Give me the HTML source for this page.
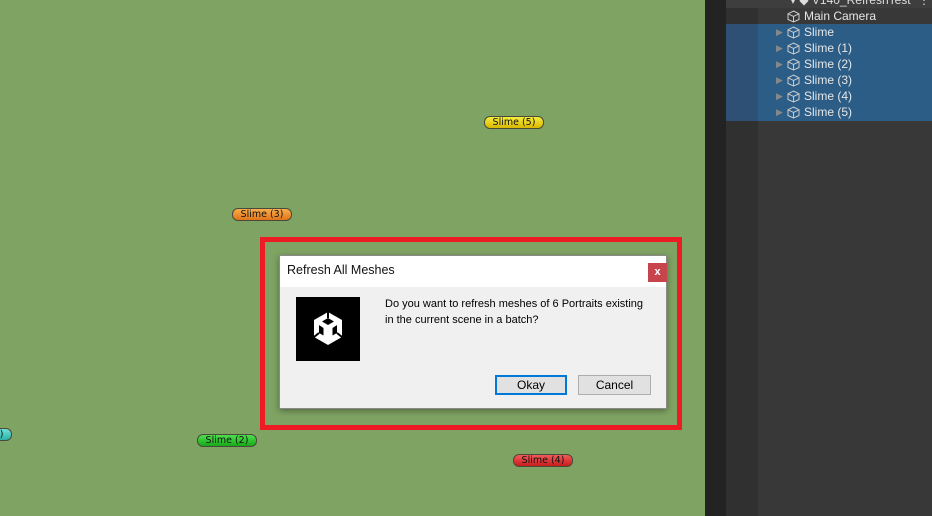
<!DOCTYPE html>
<html><head><style>
body{margin:0;width:932px;height:516px;position:relative;overflow:hidden;background:#7fa363;font-family:"Liberation Sans",sans-serif}
.pill{position:absolute;height:11px;border-radius:6px;border:1px solid #4a4a3a;font-family:"DejaVu Sans",sans-serif;font-size:9.5px;line-height:11px;color:#111;text-align:center;width:58px}
.row{position:absolute;left:726px;width:206px;height:16px;font-size:12px;line-height:16px;color:#e6e6e6}
.row span.t{position:absolute;left:78px}
.row span.a{position:absolute;left:50px;color:#888;font-size:9px}
.cube{position:absolute;left:61px;top:2px}
</style></head><body>
<div class="pill" style="left:484px;top:116px;background:linear-gradient(#f7ec3c,#d8b800)">Slime (5)</div>
<div class="pill" style="left:232px;top:208px;background:linear-gradient(#f9ae4a,#e0741a)">Slime (3)</div>
<div class="pill" style="left:197px;top:434px;background:linear-gradient(#4ee04e,#16a816)">Slime (2)</div>
<div class="pill" style="left:513px;top:454px;background:linear-gradient(#f25a5a,#c81c1c)">Slime (4)</div>
<div class="pill" style="left:-48px;top:428px;background:linear-gradient(#6fe0d8,#2ab0a8)">Slime (1)</div>

<div style="position:absolute;left:705px;top:0;width:21px;height:516px;background:#232323"></div>
<div style="position:absolute;left:726px;top:0;width:206px;height:516px;background:#383838"></div>
<div style="position:absolute;left:726px;top:0;width:32px;height:516px;background:#303030"></div>
<div style="position:absolute;left:726px;top:0;width:206px;height:8px;background:#3e3e3e;overflow:hidden"><span style="position:absolute;left:64px;top:-7px;color:#ddd;font-size:12px">▾ ◆ V140_RefreshTest</span><span style="position:absolute;right:2px;top:-7px;color:#ccc;font-size:12px">⋮</span></div>
<div style="position:absolute;left:726px;top:24px;width:206px;height:97px;background:#2c5d87"></div>
<div style="position:absolute;left:726px;top:24px;width:32px;height:97px;background:#2d5074"></div>

<div class="row" style="top:8px"><svg class="cube" width="13" height="13" viewBox="0 0 13 13" fill="none" stroke="#ccc" stroke-width="1"><path d="M6.5 1L12 3.8V9.5L6.5 12L1 9.5V3.8Z M1 3.8L6.5 6.5L12 3.8 M6.5 6.5V12"/></svg><span class="t">Main Camera</span></div>
<div class="row" style="top:24px"><span class="a">▶</span><svg class="cube" width="13" height="13" viewBox="0 0 13 13" fill="none" stroke="#ccc"><path d="M6.5 1L12 3.8V9.5L6.5 12L1 9.5V3.8Z M1 3.8L6.5 6.5L12 3.8 M6.5 6.5V12"/></svg><span class="t">Slime</span></div>
<div class="row" style="top:40px"><span class="a">▶</span><svg class="cube" width="13" height="13" viewBox="0 0 13 13" fill="none" stroke="#ccc"><path d="M6.5 1L12 3.8V9.5L6.5 12L1 9.5V3.8Z M1 3.8L6.5 6.5L12 3.8 M6.5 6.5V12"/></svg><span class="t">Slime (1)</span></div>
<div class="row" style="top:56px"><span class="a">▶</span><svg class="cube" width="13" height="13" viewBox="0 0 13 13" fill="none" stroke="#ccc"><path d="M6.5 1L12 3.8V9.5L6.5 12L1 9.5V3.8Z M1 3.8L6.5 6.5L12 3.8 M6.5 6.5V12"/></svg><span class="t">Slime (2)</span></div>
<div class="row" style="top:72px"><span class="a">▶</span><svg class="cube" width="13" height="13" viewBox="0 0 13 13" fill="none" stroke="#ccc"><path d="M6.5 1L12 3.8V9.5L6.5 12L1 9.5V3.8Z M1 3.8L6.5 6.5L12 3.8 M6.5 6.5V12"/></svg><span class="t">Slime (3)</span></div>
<div class="row" style="top:88px"><span class="a">▶</span><svg class="cube" width="13" height="13" viewBox="0 0 13 13" fill="none" stroke="#ccc"><path d="M6.5 1L12 3.8V9.5L6.5 12L1 9.5V3.8Z M1 3.8L6.5 6.5L12 3.8 M6.5 6.5V12"/></svg><span class="t">Slime (4)</span></div>
<div class="row" style="top:104px"><span class="a">▶</span><svg class="cube" width="13" height="13" viewBox="0 0 13 13" fill="none" stroke="#ccc"><path d="M6.5 1L12 3.8V9.5L6.5 12L1 9.5V3.8Z M1 3.8L6.5 6.5L12 3.8 M6.5 6.5V12"/></svg><span class="t">Slime (5)</span></div>

<div style="position:absolute;left:260px;top:237px;width:412px;height:183px;border:5px solid #ed1c24"></div>
<div style="position:absolute;left:279px;top:255px;width:388px;height:154px;background:#f0f0f0;box-shadow:0 2px 6px rgba(0,0,0,.35);border:1px solid #8a8a8a;box-sizing:border-box">
 <div style="height:31px;background:#fff;font-size:12.5px;line-height:28px;padding-left:7px;color:#111">Refresh All Meshes</div>
 <div style="position:absolute;left:368px;top:7px;width:19px;height:19px;background:#c8444c;color:#fff;font-size:11px;line-height:18px;text-align:center;font-weight:bold">x</div>
 <div style="position:absolute;left:16px;top:41px;width:64px;height:64px;background:#000">
  <svg width="64" height="64" viewBox="0 0 64 64"><path d="M32 15L46 23V40L32 48L18 40V23Z" fill="#fff"/><path d="M32 21L26 24.5L32 28L38 24.5Z M23 28V36L27.5 38.5V31Z M41 28V36L36.5 38.5V31Z" fill="#000"/><path d="M27.5 31L32 33.5L36.5 31V38.5L32 41L27.5 38.5Z" fill="#fff"/><path d="M32 15V21 M18 40L23 36 M46 40L41 36" stroke="#000" stroke-width="2"/></svg>
 </div>
 <div style="position:absolute;left:105px;top:40px;font-size:11px;line-height:16px;color:#000">Do you want to refresh meshes of 6 Portraits existing<br>in the current scene in a batch?</div>
 <div style="position:absolute;left:215px;top:119px;width:72px;height:20px;box-sizing:border-box;border:2px solid #0078d7;background:#e1e1e1;font-size:12px;line-height:16px;text-align:center">Okay</div>
 <div style="position:absolute;left:298px;top:119px;width:73px;height:20px;box-sizing:border-box;border:1px solid #adadad;background:#e1e1e1;font-size:12px;line-height:18px;text-align:center">Cancel</div>
</div>
</body></html>
